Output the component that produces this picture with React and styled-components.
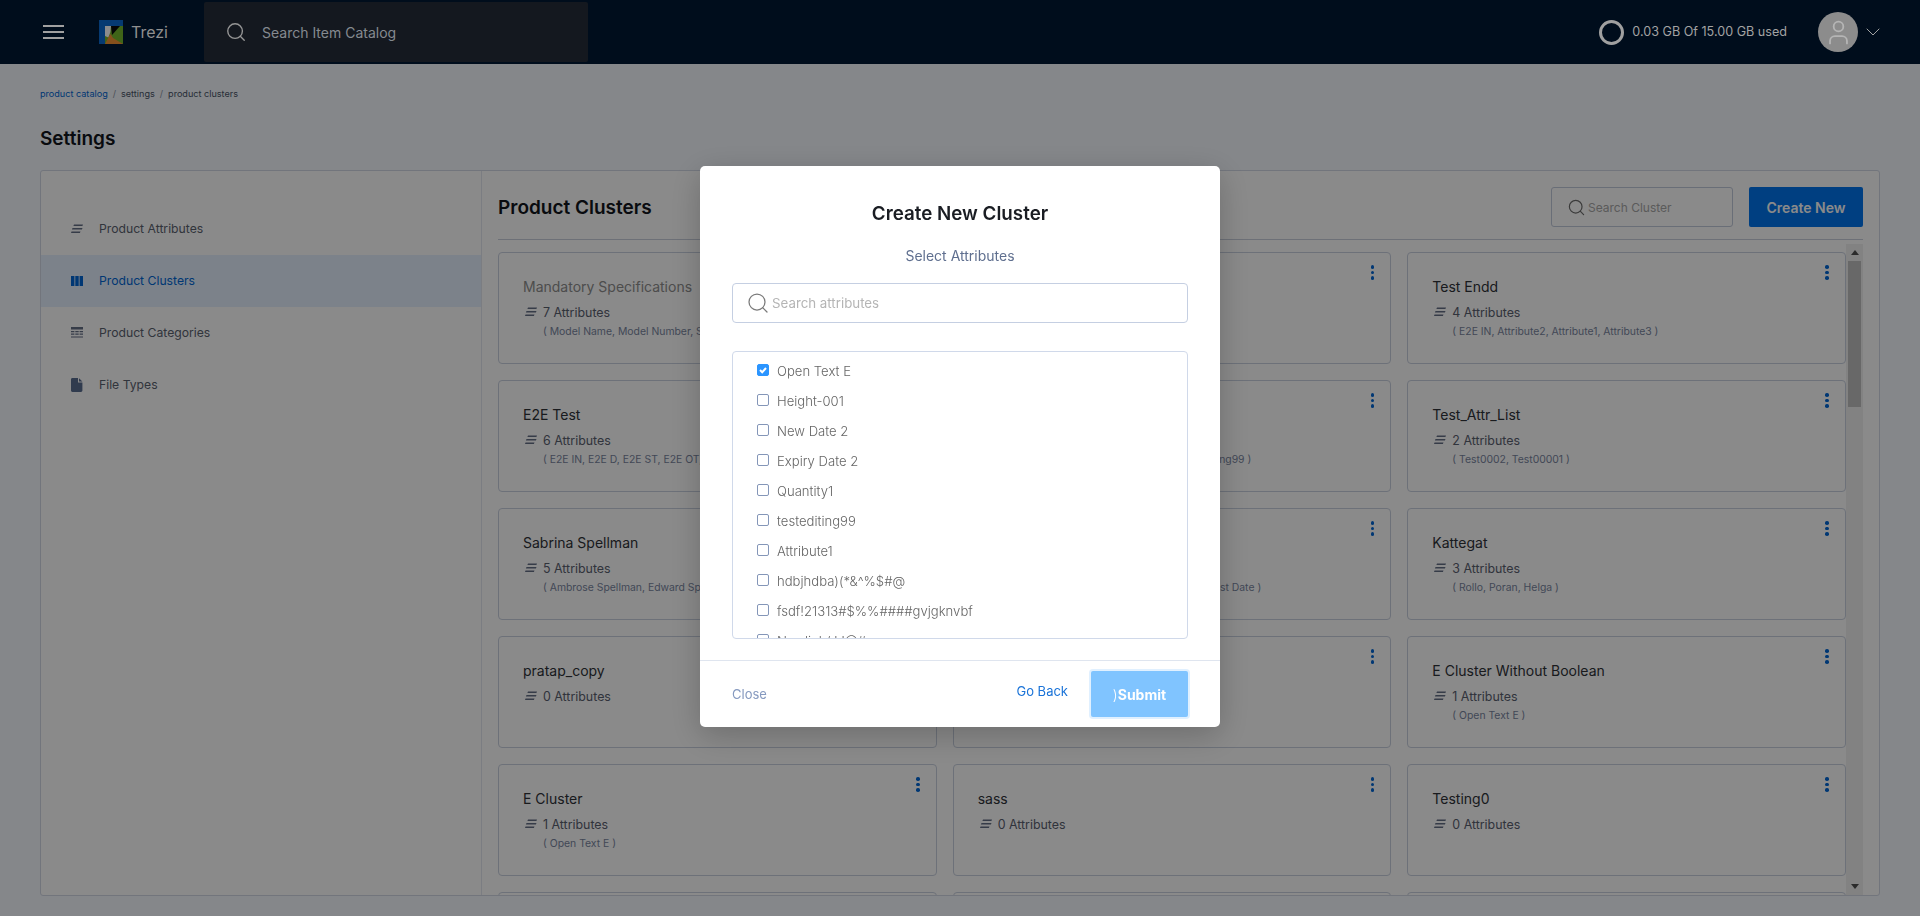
import styled, { createGlobalStyle } from 'styled-components'
import { Search, ChevronDown, User } from 'lucide-react'

const GlobalStyle = createGlobalStyle`
  html, body {
    margin: 0;
    padding: 0;
    height: 100%;
    font-family: Inter, "Noto Sans", sans-serif;
    background: #f6faff;
  }
  * { box-sizing: border-box; }
`

const Page = styled.div`
  height: 916px;
  display: flex;
  flex-direction: column;
  overflow: hidden;
`

// the header stays above the dialog backdrop, so its colours are the dimmed ones
const Header = styled.header`
  position: relative;
  z-index: 2;
  flex: none;
  height: 64px;
  background: #000d1c;
  display: flex;
  align-items: center;
  padding: 0 35px 0 43px;
`

const MenuButton = styled.div`
  width: 21px;
  display: flex;
  flex-direction: column;
  gap: 4px;
  margin-right: 35px;
  span {
    height: 2px;
    background: #a0a0a0;
  }
`

const Brand = styled.div`
  width: 105px;
  display: flex;
  align-items: center;
  gap: 8px;
  color: #8f8f8f;
  font-size: 16px;
  margin-top: -1px;
`

const HeaderSearch = styled.div`
  width: 384px;
  height: 60px;
  background: #14181f;
  border-radius: 2px;
  display: flex;
  align-items: center;
  gap: 15px;
  padding-left: 21px;
  color: #858a90;
  font-size: 14px;
  svg { color: #969696; }
`

const HeaderRight = styled.div`
  margin-left: auto;
  display: flex;
  align-items: center;
`

const Ring = styled.div`
  width: 25px;
  height: 25px;
  border: 3px solid #a0a0a0;
  border-radius: 50%;
  margin-right: 8px;
`

const Usage = styled.div`
  color: #a3a3a3;
  font-size: 12.6px;
  margin: -2px 31px 0 0;
  white-space: nowrap;
`

const Avatar = styled.div`
  width: 40px;
  height: 40px;
  border-radius: 50%;
  background: #8c8c8c;
  display: flex;
  align-items: center;
  justify-content: center;
  margin-right: 3px;
  svg { color: #b5b5b5; }
`

const Content = styled.main`
  flex: 1;
  min-height: 0;
  display: flex;
  flex-direction: column;
  padding: 0 40px 20px;
`

const Breadcrumb = styled.nav`
  height: 14px;
  margin-top: 22px;
  display: flex;
  align-items: center;
  gap: 5px;
  font-size: 9.1px;
  color: #4a5568;
  a { color: #0067d6; }
  i { font-style: normal; color: #8a93a5; }
`

const PageTitle = styled.h1`
  margin: 24px 0 0;
  height: 30px;
  line-height: 30px;
  font-size: 19px;
  font-weight: 600;
  color: #11151c;
`

const Panel = styled.section`
  margin-top: 16px;
  flex: 1;
  min-height: 0;
  background: #fff;
  border: 1px solid #d3d9e6;
  border-radius: 3px;
  display: flex;
  overflow: hidden;
`

const Sidebar = styled.aside`
  flex: none;
  width: 441px;
  padding-top: 32px;
  border-right: 1px solid #e4e8f0;
`

const SideItem = styled.div`
  height: 52px;
  display: flex;
  align-items: center;
  padding: 0 0 1px 30px;
  font-size: 12.2px;
  background: ${(props) => (props.$active ? '#e6f1ff' : 'transparent')};
  color: ${(props) => (props.$active ? '#0067d6' : '#5b6270')};
  svg { margin-right: 16px; flex: none; }
`

const Main = styled.div`
  flex: 1;
  min-width: 0;
  padding: 0 16px 0 16px;
  display: flex;
  flex-direction: column;
`

const MainBar = styled.div`
  flex: none;
  height: 69px;
  padding: 16px 0 12px;
  border-bottom: 1px solid #c9cfdc;
  display: flex;
  align-items: center;
`

const MainTitle = styled.h2`
  margin: 0 auto 0 0;
  font-size: 19px;
  font-weight: 600;
  color: #11151c;
`

const ClusterSearch = styled.div`
  width: 182px;
  height: 40px;
  border: 1px solid #c3cbdc;
  border-radius: 3px;
  display: flex;
  align-items: center;
  gap: 2px;
  padding-left: 15px;
  font-size: 12px;
  color: #a8a8a8;
  margin-right: 16px;
  svg { color: #6e6e6e; }
`

const CreateButton = styled.button`
  width: 114px;
  height: 40px;
  border: 0;
  border-radius: 2px;
  background: #0075ee;
  color: #fff;
  font: 600 14px Inter, sans-serif;
`

const CardsArea = styled.div`
  flex: 1;
  min-height: 0;
  margin-top: 4px;
  display: flex;
  overflow: hidden;
`

const CardGrid = styled.div`
  flex: 1;
  min-width: 0;
  padding-top: 8px;
  display: grid;
  grid-template-columns: repeat(3, 1fr);
  grid-auto-rows: 112px;
  gap: 16px;
`

const Card = styled.article`
  position: relative;
  border: 1px solid #c9d1e0;
  border-radius: 4px;
  padding: 24px 24px 0;
`

const CardTitle = styled.h3`
  margin: 0;
  min-height: 20px;
  line-height: 20px;
  font-size: 14px;
  font-weight: 400;
  color: ${(props) => (props.$muted ? '#8e8e8e' : '#2f3238')};
  white-space: nowrap;
`

const AttrCount = styled.div`
  margin-top: 6px;
  height: 18px;
  display: flex;
  align-items: center;
  gap: 6px;
  font-size: 12.4px;
  color: #5a6070;
  padding-left: 2px;
`

const AttrList = styled.div`
  margin-top: ${(props) => (props.$alone ? '27px' : '3px')};
  padding-left: 20px;
  line-height: 16px;
  font-size: 10.4px;
  color: #7a869f;
  white-space: nowrap;
`

const Kebab = styled.div`
  position: absolute;
  top: 12px;
  right: 16px;
  display: flex;
  flex-direction: column;
  gap: 2px;
  span {
    width: 3.5px;
    height: 3.5px;
    border-radius: 50%;
    background: #0067d6;
  }
`

const Scrollbar = styled.div`
  flex: none;
  width: 17px;
  background: #f1f1f1;
  display: flex;
  flex-direction: column;
  align-items: center;
`

const ScrollArrow = styled.div`
  flex: none;
  height: 17px;
  display: flex;
  align-items: center;
  justify-content: center;
  &::before {
    content: '';
    border-left: 4px solid transparent;
    border-right: 4px solid transparent;
    border-${(props) => (props.$down ? 'top' : 'bottom')}: 5px solid #505050;
  }
`

const ScrollThumb = styled.div`
  width: 13px;
  height: 146px;
  background: #c1c1c1;
`

const ScrollSpacer = styled.div`
  flex: 1;
`

const Overlay = styled.div`
  position: fixed;
  z-index: 1;
  inset: 0;
  background: rgba(0, 0, 0, 0.46);
  display: flex;
  justify-content: center;
  align-items: flex-start;
  padding-top: 166px;
`

const Modal = styled.div`
  width: 520px;
  height: 561px;
  background: #fff;
  border-radius: 5px;
  box-shadow: 0 8px 32px rgba(0, 0, 0, 0.22);
  display: flex;
  flex-direction: column;
`

const ModalBody = styled.div`
  padding: 36px 32px 21px;
`

const ModalTitle = styled.h2`
  margin: 0;
  line-height: 24px;
  text-align: center;
  font-size: 18.8px;
  font-weight: 600;
  color: #1a1d23;
`

const ModalSub = styled.div`
  margin-top: 20px;
  line-height: 20px;
  text-align: center;
  font-size: 14px;
  color: #5f6f8f;
`

const AttrSearch = styled.div`
  margin-top: 17px;
  height: 40px;
  border: 1px solid #c5cfe2;
  border-radius: 4px;
  display: flex;
  align-items: center;
  gap: 2px;
  padding-left: 13px;
  font-size: 13.3px;
  color: #b5b5b5;
  svg { color: #7a7a7a; }
`

const AttrBox = styled.div`
  margin-top: 28px;
  height: 288px;
  border: 1px solid #d0d9ea;
  border-radius: 4px;
  padding: 4px 24px 0;
  overflow: hidden;
`

const AttrRow = styled.label`
  height: 30px;
  display: flex;
  align-items: center;
  gap: 8px;
  font-size: 13.1px;
  font-weight: 300;
  color: #666;
  white-space: nowrap;
`

const Check = styled.span`
  width: 12px;
  height: 12px;
  flex: none;
  margin-top: -2px;
  border-radius: 2px;
  border: 1px solid ${(props) => (props.$checked ? '#2b95ff' : '#8496b8')};
  background: ${(props) => (props.$checked ? '#2b95ff' : '#fff')};
  display: flex;
  align-items: center;
  justify-content: center;
`

const ModalFooter = styled.div`
  border-top: 1px solid #dfe5ef;
  padding: 10px 32px 0;
  display: flex;
  align-items: center;
  gap: 23px;
`

const CloseLink = styled.a`
  margin-right: auto;
  font-size: 13px;
  color: #8599bf;
`

const BackLink = styled.a`
  margin-bottom: 6px;
  font-size: 13px;
  color: #1a73d8;
`

const SubmitButton = styled.button`
  width: 97px;
  height: 46px;
  border: 0;
  border-radius: 2px;
  background: #80c4ff;
  box-shadow: 0 0 0 2px #e0f0ff;
  color: #fff;
  font: 700 14px Inter, sans-serif;
  span { font-weight: 300; }
`

const LinesIcon = () => (
  <svg width="12" height="10" viewBox="0 0 12 10" fill="#646f86">
    <path d="M3 0.5h9l-.6 1.6H2.4zM1.5 4h10l-.6 1.6H.9zM.5 7.5h9l-.6 1.6H0z" />
  </svg>
)

const ColumnsIcon = () => (
  <svg width="12" height="10" viewBox="0 0 12 10" fill="#0067d6">
    <path d="M0 0h3.4v10H0zM4.3 0h3.4v10H4.3zM8.6 0H12v10H8.6z" />
  </svg>
)

const TableIcon = () => (
  <svg width="12" height="11" viewBox="0 0 12 11" fill="#646f86">
    <path d="M0 0h12v2.4H0zM0 4h3.4v1.2H0zM4.3 4h3.4v1.2H4.3zM8.6 4H12v1.2H8.6zM0 6.6h3.4v1.2H0zM4.3 6.6h3.4v1.2H4.3zM8.6 6.6H12v1.2H8.6zM0 9.4h12v1H0z" />
  </svg>
)

const FileIcon = () => (
  <svg width="12" height="14" viewBox="0 0 12 14" fill="#5a6d90">
    <path d="M1.4 0H7v4.4h4.4v8.2c0 .8-.6 1.4-1.4 1.4H1.4C.6 14 0 13.4 0 12.6V1.4C0 .6.6 0 1.4 0zM8 .2L11.4 3.6H8z" />
  </svg>
)

const Logo = () => (
  <svg width="24" height="24" viewBox="0 0 24 24">
    <rect width="24" height="24" fill="#063a72" />
    <path d="M6 6h18v18H6z" fill="#3f6418" />
    <path d="M12 6h9l-8 9z" fill="#060606" />
    <path d="M6 6h6l-.6 6-2 5.5L6 16z" fill="#8c8c8c" />
    <path d="M6 24l3.6-7 2-3 2.4 4 10 6z" fill="#85501c" />
  </svg>
)

const clusters = [
  { name: 'Mandatory Specifications', muted: true, count: 7, attrs: 'Model Name, Model Number, SKU, Brand' },
  { name: '', count: null },
  { name: 'Test Endd', count: 4, attrs: 'E2E IN, Attribute2, Attribute1, Attribute3' },
  { name: 'E2E Test', count: 6, attrs: 'E2E IN, E2E D, E2E ST, E2E OT, E2E NU, E2E BO' },
  { name: '', count: null, attrs: 'Test0002, Height-001, New Date 2, testediting99' },
  { name: 'Test_Attr_List', count: 2, attrs: 'Test0002, Test00001' },
  { name: 'Sabrina Spellman', count: 5, attrs: 'Ambrose Spellman, Edward Spellman, Hilda Spellman' },
  { name: '', count: null, attrs: 'New Date 2, Expiry Date 2, Height-001, Latest Date' },
  { name: 'Kattegat', count: 3, attrs: 'Rollo, Poran, Helga' },
  { name: 'pratap_copy', count: 0 },
  { name: '', count: null },
  { name: 'E Cluster Without Boolean', count: 1, attrs: 'Open Text E' },
  { name: 'E Cluster', count: 1, attrs: 'Open Text E' },
  { name: 'sass', count: 0 },
  { name: 'Testing0', count: 0 },
  { name: '', count: null },
  { name: '', count: null },
  { name: '', count: null },
]

const attributes = [
  'Open Text E',
  'Height-001',
  'New Date 2',
  'Expiry Date 2',
  'Quantity1',
  'testediting99',
  'Attribute1',
  'hdbjhdba)(*&^%$#@',
  'fsdf!21313#$%%####gvjgknvbf',
  'Newlink/ ! !@#',
]

const ClusterCard = ({ cluster }) => (
  <Card>
    <Kebab>
      <span />
      <span />
      <span />
    </Kebab>
    <CardTitle $muted={cluster.muted}>{cluster.name}</CardTitle>
    {cluster.count !== null && (
      <AttrCount>
        <LinesIcon />
        {cluster.count} Attributes
      </AttrCount>
    )}
    {cluster.attrs && <AttrList $alone={cluster.count === null}>( {cluster.attrs} )</AttrList>}
  </Card>
)

export default function App() {
  return (
    <>
      <GlobalStyle />
      <Page>
        <Header>
          <MenuButton>
            <span />
            <span />
            <span />
          </MenuButton>
          <Brand>
            <Logo />
            Trezi
          </Brand>
          <HeaderSearch>
            <Search size={22} strokeWidth={1.5} />
            Search Item Catalog
          </HeaderSearch>
          <HeaderRight>
            <Ring />
            <Usage>0.03 GB Of 15.00 GB used</Usage>
            <Avatar>
              <User size={29} strokeWidth={1.5} />
            </Avatar>
            <ChevronDown size={24} strokeWidth={1} color="#a3a3a3" />
          </HeaderRight>
        </Header>
        <Content>
          <Breadcrumb>
            <a>product catalog</a>
            <i>/</i>
            <span>settings</span>
            <i>/</i>
            <span>product clusters</span>
          </Breadcrumb>
          <PageTitle>Settings</PageTitle>
          <Panel>
            <Sidebar>
              <SideItem>
                <LinesIcon />
                Product Attributes
              </SideItem>
              <SideItem $active>
                <ColumnsIcon />
                Product Clusters
              </SideItem>
              <SideItem>
                <TableIcon />
                Product Categories
              </SideItem>
              <SideItem>
                <FileIcon />
                File Types
              </SideItem>
            </Sidebar>
            <Main>
              <MainBar>
                <MainTitle>Product Clusters</MainTitle>
                <ClusterSearch>
                  <Search size={19} strokeWidth={1.5} />
                  Search Cluster
                </ClusterSearch>
                <CreateButton>Create New</CreateButton>
              </MainBar>
              <CardsArea>
                <CardGrid>
                  {clusters.map((cluster, i) => (
                    <ClusterCard key={i} cluster={cluster} />
                  ))}
                </CardGrid>
                <Scrollbar>
                  <ScrollArrow />
                  <ScrollThumb />
                  <ScrollSpacer />
                  <ScrollArrow $down />
                </Scrollbar>
              </CardsArea>
            </Main>
          </Panel>
        </Content>
      </Page>
      <Overlay>
        <Modal>
          <ModalBody>
            <ModalTitle>Create New Cluster</ModalTitle>
            <ModalSub>Select Attributes</ModalSub>
            <AttrSearch>
              <Search size={24} strokeWidth={1.25} />
              Search attributes
            </AttrSearch>
            <AttrBox>
              {attributes.map((attr, i) => (
                <AttrRow key={attr}>
                  <Check $checked={i === 0}>
                    {i === 0 && (
                      <svg width="10" height="10" viewBox="0 0 10 10" fill="none" stroke="#fff" strokeWidth="2">
                        <path d="M2 5l2.2 2.2L8 3" />
                      </svg>
                    )}
                  </Check>
                  {attr}
                </AttrRow>
              ))}
            </AttrBox>
          </ModalBody>
          <ModalFooter>
            <CloseLink>Close</CloseLink>
            <BackLink>Go Back</BackLink>
            <SubmitButton>
              <span>)</span>Submit
            </SubmitButton>
          </ModalFooter>
        </Modal>
      </Overlay>
    </>
  )
}
